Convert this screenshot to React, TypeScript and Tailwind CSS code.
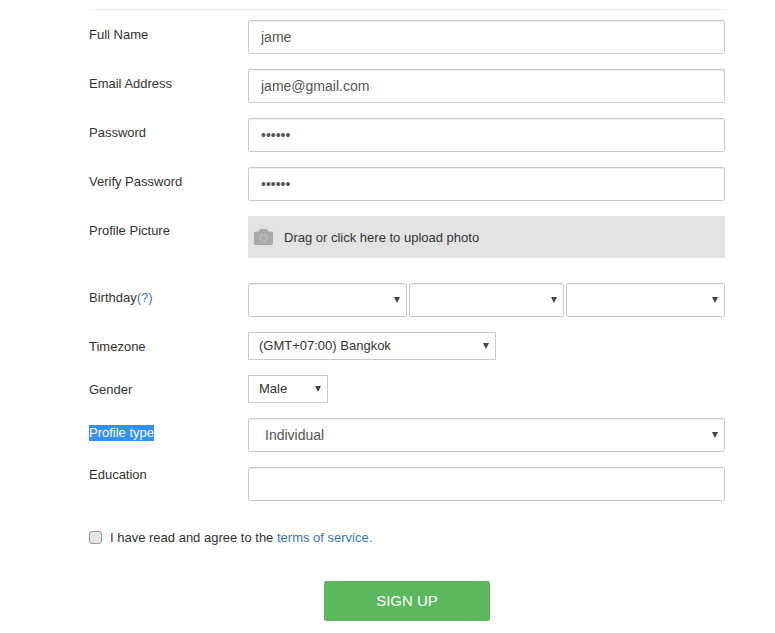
import { ReactNode } from "react";

const inputCls = "block w-full h-[34px] px-3 bg-white border border-[#ccc] rounded-[2px] text-[14px] text-[#555] shadow-[inset_0_1px_1px_rgba(0,0,0,0.075)] outline-none";

function Row({ label, children, className = "mb-[15px]", labelCls = "pt-[5px]" }: { label: ReactNode; children: ReactNode; className?: string; labelCls?: string }) {
  return (
    <div className={`flex ${className}`}>
      <div className={`w-[159px] shrink-0 text-[13px] leading-5 text-[#333] ${labelCls}`}>{label}</div>
      <div className="flex-1 min-w-0">{children}</div>
    </div>
  );
}

function Arrow() {
  return (
    <svg className="absolute top-1/2 -translate-y-1/2 right-[7px] pointer-events-none" width="6" height="6" viewBox="0 0 6 6">
      <path d="M0 0H6L3 6Z" fill="#444" />
    </svg>
  );
}

function Select({ value = "", className, padding = "pl-2.5", tall = true }: { value?: string; className: string; padding?: string; tall?: boolean }) {
  return (
    <div className={`relative ${className}`}>
      <select
        defaultValue={value}
        className={`appearance-none block w-full ${tall ? "h-[34px] text-[14px] text-[#555] rounded-[2px] shadow-[inset_0_1px_1px_rgba(0,0,0,0.075)]" : "h-7 pb-px text-[13px] text-[#333]"} ${padding} bg-white border border-[#ccc] outline-none`}
      >
        <option value={value}>{value}</option>
      </select>
      <Arrow />
    </div>
  );
}

export default function App() {
  return (
    <main className="h-[633px] overflow-hidden bg-white font-['Liberation_Sans',Arial,sans-serif]">
      <div className="ml-[89px] w-[636px] pt-[9px]">
        <div className="border-t border-[#eee] mb-[10px]" />

        <Row label="Full Name">
          <input className={inputCls} defaultValue="jame" />
        </Row>
        <Row label="Email Address">
          <input className={inputCls} defaultValue="jame@gmail.com" />
        </Row>
        <Row label="Password">
          <input type="password" className={inputCls} defaultValue="secret" />
        </Row>
        <Row label="Verify Password">
          <input type="password" className={inputCls} defaultValue="secret" />
        </Row>

        <Row label="Profile Picture" className="mb-[25px]">
          <div className="flex items-center h-[42px] bg-[#e3e3e3] pl-[6px] text-[13px] text-[#333]">
            <svg width="19" height="16" viewBox="0 0 19 16" className="shrink-0 mr-[11px]">
              <path
                fill="#a9a9a9"
                d="M6 0H13L14.5 2.5H17.2C18.2 2.5 19 3.3 19 4.3V14.2C19 15.2 18.2 16 17.2 16H1.8C0.8 16 0 15.2 0 14.2V4.3C0 3.3 0.8 2.5 1.8 2.5H4.5Z"
              />
              <circle cx="9.5" cy="9" r="3.5" fill="none" stroke="#c6c6c6" strokeWidth="1" />
            </svg>
            <span className="pt-0.5">Drag or click here to upload photo</span>
          </div>
        </Row>

        <Row label={<>Birthday<a className="text-[#337ab7]">(?)</a></>}>
          <div className="flex gap-0.5">
            <Select className="w-[159px]" />
            <Select className="w-[155px]" />
            <Select className="w-[159px]" />
          </div>
        </Row>
        <Row label="Timezone">
          <Select value="(GMT+07:00) Bangkok" className="w-[248px]" tall={false} />
        </Row>
        <Row label="Gender">
          <Select value="Male" className="w-20" tall={false} />
        </Row>
        <Row label={<span className="bg-[#3390ff] pb-px text-white">Profile type</span>}>
          <Select value="Individual" className="w-full" padding="pl-4" />
        </Row>
        <Row label="Education" className="mb-[29px]" labelCls="-mt-[2px]">
          <input className={inputCls} />
        </Row>

        <label className="flex items-center h-[14px] text-[13px] text-[#333]">
          <input type="checkbox" className="appearance-none w-[13px] h-[13px] mr-2 rounded-[3px] border border-[#999] bg-[#e6e6e6]" />
          <span className="pt-0.5">I have read and agree to the <a className="text-[#337ab7]">terms of service.</a></span>
        </label>

        <div className="flex justify-center mt-[37px]">
          <button className="w-[166px] h-10 rounded-[2px] bg-[#5cb85c] text-white text-[15px]">SIGN UP</button>
        </div>
      </div>
    </main>
  );
}
